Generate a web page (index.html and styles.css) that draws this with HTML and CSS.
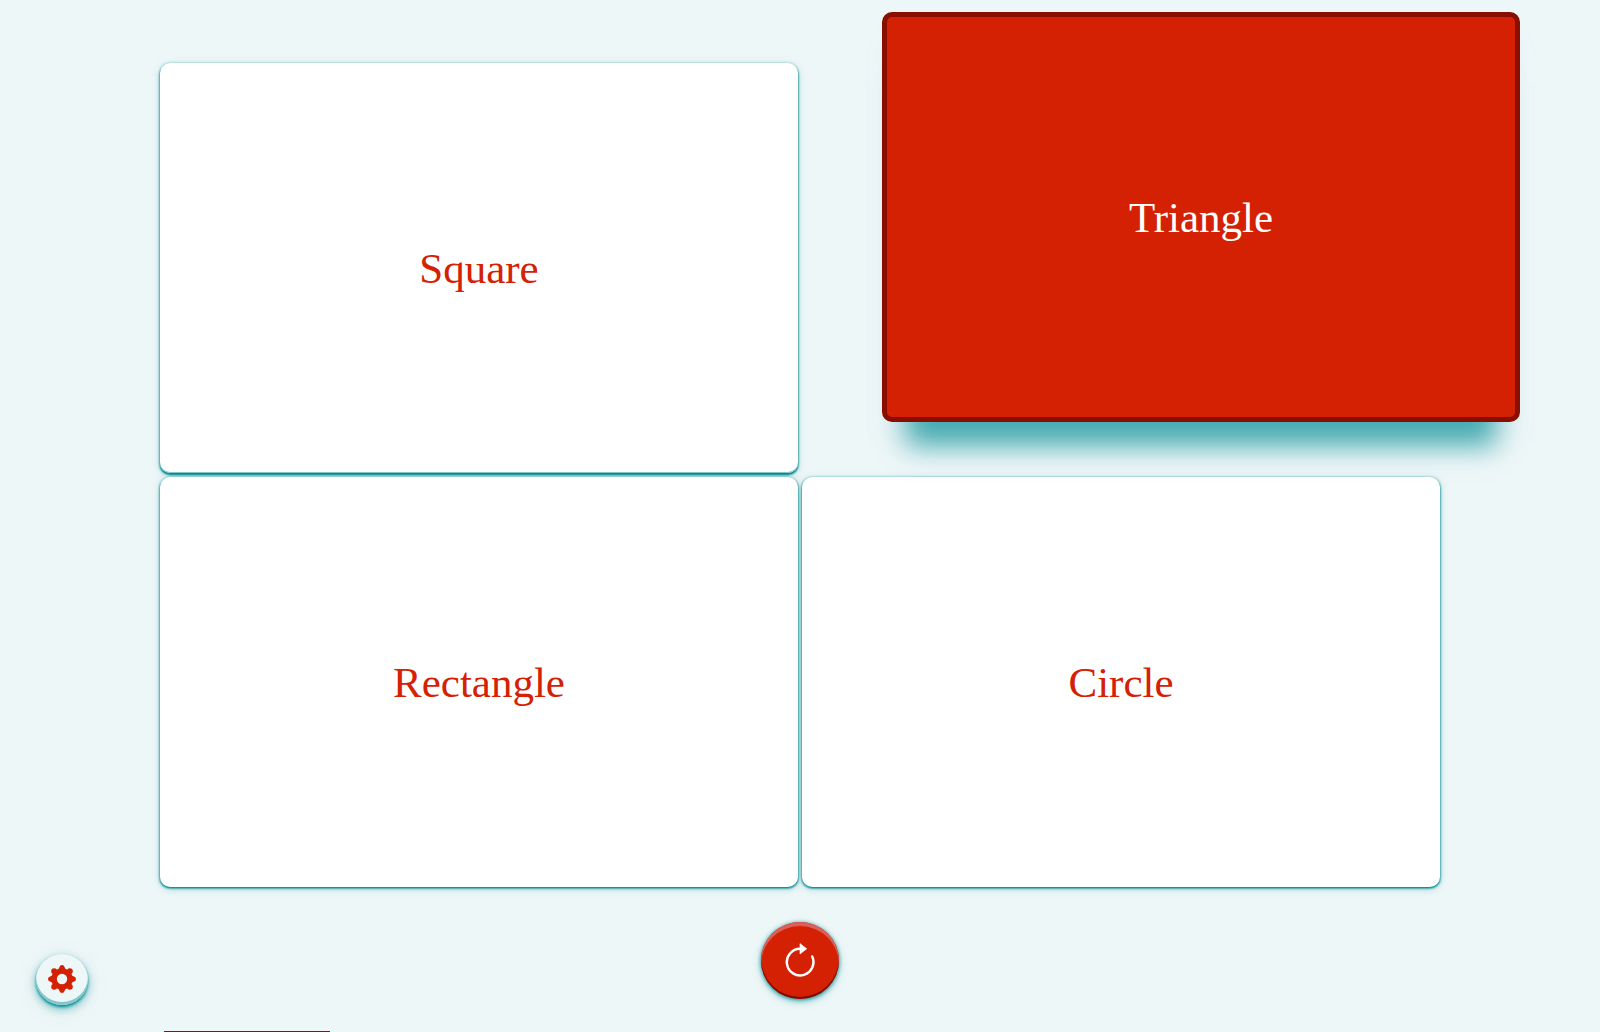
FILE: index.html
```
<!DOCTYPE html>
<html lang="en">
<head>
    <meta charset="UTF-8">
    <meta name="viewport" content="width=device-width, initial-scale=1.0">
    <title>Shapes</title>
    <link rel="stylesheet" href="styles.css">
</head>
<body>
    <main class="cards">
        <button type="button" class="card card-top">Square</button>
        <button type="button" class="card card-active">Triangle</button>
        <button type="button" class="card">Rectangle</button>
        <button type="button" class="card">Circle</button>
    </main>
    <div class="controls">
        <button type="button" class="restart" aria-label="Restart">
            <svg width="30" height="34" viewBox="0 0 30 34" aria-hidden="true">
                <path d="M15 5.8A13.3 13.3 0 1 0 27.2 13.5" fill="none" stroke="#fff" stroke-width="2.5" stroke-linecap="round"/>
                <path d="M15 .6 21.7 5.8 15 11z" fill="#fff" stroke="#fff" stroke-width=".6" stroke-linejoin="round"/>
            </svg>
        </button>
    </div>
    <button type="button" class="settings" aria-label="Settings">
        <svg width="28" height="28" viewBox="-14 -14 28 28" aria-hidden="true">
            <g fill="#d42103">
                <circle r="10.6"/>
                <path id="tooth" d="M-5-9Q-3-10-2.5-12Q-2-14 0-14T2.5-12Q3-10 5-9L4-5H-4z"/>
                <use href="#tooth" transform="rotate(90)"/>
                <use href="#tooth" transform="rotate(180)"/>
                <use href="#tooth" transform="rotate(270)"/>
                <circle cx="7.8" cy="7.8" r="3"/>
                <circle cx="-7.8" cy="7.8" r="3"/>
                <circle cx="7.8" cy="-7.8" r="3"/>
                <circle cx="-7.8" cy="-7.8" r="3"/>
            </g>
            <circle r="5.2" fill="#eef7f8"/>
        </svg>
    </button>
    <footer class="drawer"></footer>
</body>
</html>
```

FILE: styles.css
```
* {
    box-sizing: border-box;
}

body {
    display: flex;
    flex-direction: column;
    min-height: 100vh;
    margin: 0;
    background-color: #eef7f8;
    font-family: "Liberation Serif", serif;
}

button {
    padding: 0;
    border: none;
    cursor: pointer;
}

.cards {
    display: grid;
    grid-template-columns: 1fr 1fr;
    gap: 4px;
    width: 80%;
    margin: 63px auto 0;
}

.card {
    min-height: 410px;
    border-radius: 10px;
    background-color: #fff;
    color: #d42103;
    font-family: inherit;
    font-size: 43px;
    box-shadow: 0 1px 2px #008c94, 0 1px 3px #008c94, 0 2px 8px rgba(0, 140, 148, 0.25);
}

.card-top {
    box-shadow: inset 0 -1px 0 #84c7cb, 0 2px 2px #008c94, 0 1px 3px #008c94, 0 2px 8px rgba(0, 140, 148, 0.25);
}

/* lifted out of the grid while it is picked */
.card-active {
    z-index: 1;
    border: 5px solid #880e00;
    background-color: #d42103;
    color: #fff;
    transform: translate(80px, -51px);
    box-shadow: 0 48px 26px -24px rgba(0, 140, 148, 0.7), 0 20px 30px rgba(0, 140, 148, 0.03);
}

.controls {
    display: flex;
    justify-content: center;
    margin-top: 35px;
}

.restart {
    display: flex;
    align-items: center;
    justify-content: center;
    width: 78px;
    height: 77px;
    padding-bottom: 2px;
    border-radius: 50%;
    background-color: #d42103;
    box-shadow: inset 0 4px 0 #dc5f59, inset 0 -2px 1px #780b00, 0 1px 4px #008c94, 0 3px 10px rgba(0, 140, 148, 0.3);
}

.settings {
    position: fixed;
    left: 36px;
    bottom: 27px;
    display: flex;
    align-items: center;
    justify-content: center;
    width: 52px;
    height: 51px;
    padding-bottom: 2px;
    border-radius: 50%;
    background-color: #eef7f8;
    box-shadow: inset 0 -3px 0 #84c7cb, 0 2px 3px #008c94, 0 4px 10px rgba(0, 140, 148, 0.5), 0 4px 24px rgba(0, 140, 148, 0.1);
}

.drawer {
    width: 166px;
    margin-top: auto;
    margin-left: calc(10% + 4px);
    border-top: 1px solid #7b1030;
}
```
